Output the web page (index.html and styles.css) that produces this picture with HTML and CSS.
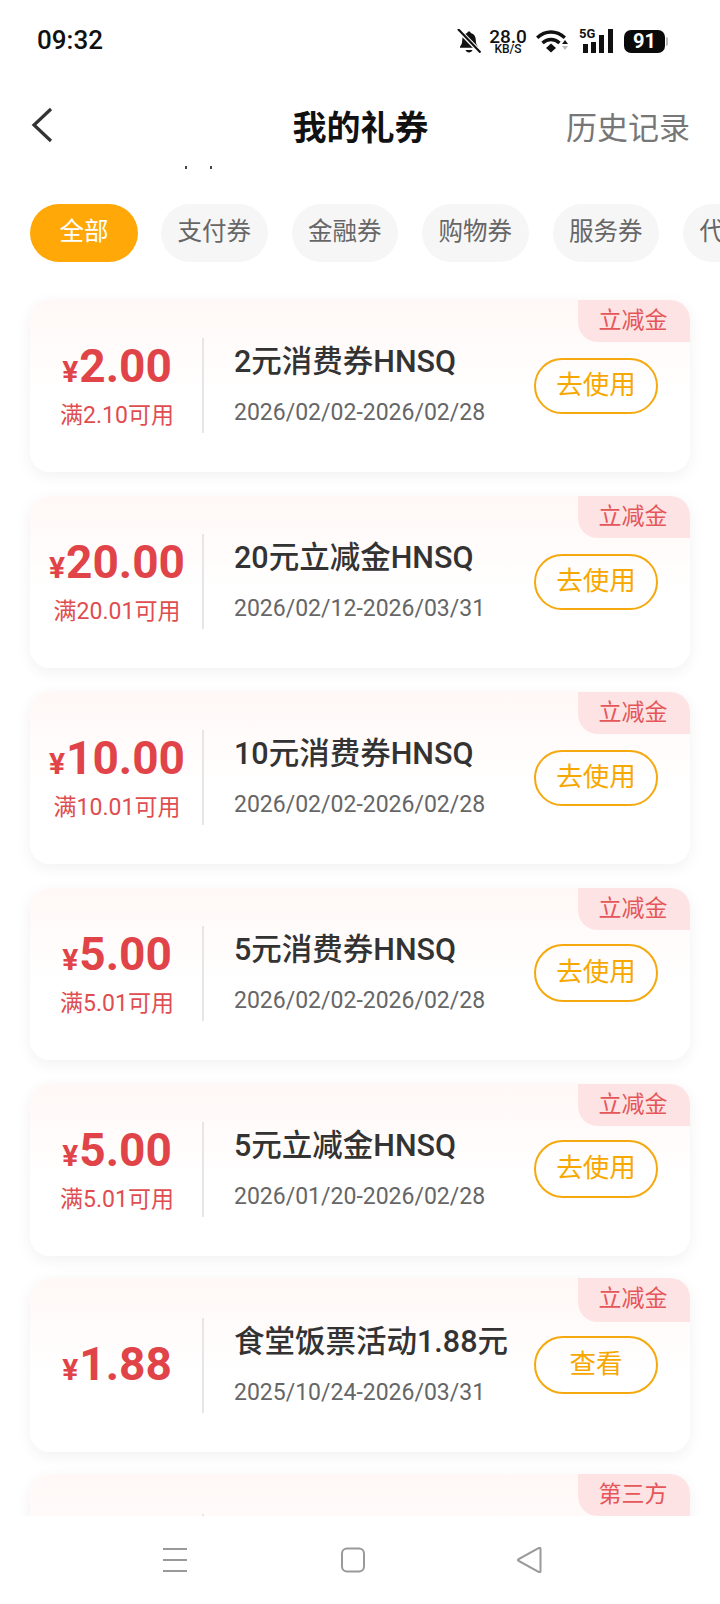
FILE: index.html
```html
<!DOCTYPE html>
<html lang="zh-CN">
<head>
    <meta charset="UTF-8">
    <meta name="viewport" content="width=device-width, initial-scale=1.0">
    <title>我的礼券</title>
    <link rel="stylesheet" href="styles.css">
</head>
<body>
    <div class="phone">
        <div class="status-bar">
            <span class="time">09:32</span>
            <div class="status-icons">
                <svg class="icon-bell" width="24" height="24" viewBox="0 0 24 24">
                    <path d="M12 2.5c1 0 1.7.7 1.8 1.6 3.4.9 5 3.6 5 7.1 0 2.6.6 4.600 2.200 6.300v1.300H3v-1.300c1.600-1.700 2.200-3.700 2.200-6.300 0-3.500 1.600-6.200 5-7.100.1-.9.8-1.600 1.800-1.600z" fill="#111"/>
                    <path d="M8.500 21h7c-.5 1.500-1.900 2.500-3.500 2.500s-3-1-3.500-2.500z" fill="#111"/>
                    <path d="M1.500 1 23 23" stroke="#fff" stroke-width="4.500"/>
                    <path d="M1 0 23.500 23.500" stroke="#111" stroke-width="2.200"/>
                </svg>
                <div class="net-speed">
                    <span class="speed-value">28.0</span>
                    <span class="speed-unit">KB/S</span>
                </div>
                <svg class="icon-wifi" width="32" height="24" viewBox="0 0 32 24">
                    <path d="M1.200 8.800C9.500 1 20.500 1 28.800 8.800" fill="none" stroke="#111" stroke-width="3.400"/>
                    <path d="M6.500 14c5-4.700 12-4.700 17 0" fill="none" stroke="#111" stroke-width="3.400"/>
                    <path d="M15 14.500l5 4.500-5 4.500-5-4.500z" fill="#111"/>
                    <path d="M29 11l3 4h-6z" fill="#111"/>
                    <path d="M29 21l3-4h-6z" fill="#bbb"/>
                </svg>
                <div class="signal">
                    <span class="signal-label">5G</span>
                    <svg width="31" height="25" viewBox="0 0 31 25">
                        <rect x="0" y="15" width="5" height="9" fill="#111"/>
                        <rect x="8" y="13" width="5" height="11" fill="#111"/>
                        <rect x="16" y="6" width="5" height="18" fill="#111"/>
                        <rect x="25" y="0" width="5" height="24" fill="#111"/>
                    </svg>
                </div>
                <div class="battery">91</div>
            </div>
        </div>

        <header class="top-bar">
            <svg class="back" width="24" height="36" viewBox="0 0 24 36">
                <path d="M21 2 4 18l17 16" fill="none" stroke="#333" stroke-width="3.200"/>
            </svg>
            <h1 class="page-title">我的礼券</h1>
            <a class="history">历史记录</a>
        </header>

        <main class="content">
            <i class="scroll-mark scroll-mark-a"></i>
            <i class="scroll-mark scroll-mark-b"></i>

            <div class="chips">
                <span class="chip active">全部</span>
                <span class="chip">支付券</span>
                <span class="chip">金融券</span>
                <span class="chip">购物券</span>
                <span class="chip">服务券</span>
                <span class="chip">代金券</span>
            </div>

            <div class="coupons">
                <div class="coupon">
                    <span class="tag">立减金</span>
                    <div class="price">
                        <div class="amount"><small>¥</small>2.00</div>
                        <div class="limit">满2.10可用</div>
                    </div>
                    <div class="info">
                        <div class="name">2元消费券HNSQ</div>
                        <div class="dates">2026/02/02-2026/02/28</div>
                    </div>
                    <button class="use-btn">去使用</button>
                </div>

                <div class="coupon">
                    <span class="tag">立减金</span>
                    <div class="price">
                        <div class="amount"><small>¥</small>20.00</div>
                        <div class="limit">满20.01可用</div>
                    </div>
                    <div class="info">
                        <div class="name">20元立减金HNSQ</div>
                        <div class="dates">2026/02/12-2026/03/31</div>
                    </div>
                    <button class="use-btn">去使用</button>
                </div>

                <div class="coupon">
                    <span class="tag">立减金</span>
                    <div class="price">
                        <div class="amount"><small>¥</small>10.00</div>
                        <div class="limit">满10.01可用</div>
                    </div>
                    <div class="info">
                        <div class="name">10元消费券HNSQ</div>
                        <div class="dates">2026/02/02-2026/02/28</div>
                    </div>
                    <button class="use-btn">去使用</button>
                </div>

                <div class="coupon">
                    <span class="tag">立减金</span>
                    <div class="price">
                        <div class="amount"><small>¥</small>5.00</div>
                        <div class="limit">满5.01可用</div>
                    </div>
                    <div class="info">
                        <div class="name">5元消费券HNSQ</div>
                        <div class="dates">2026/02/02-2026/02/28</div>
                    </div>
                    <button class="use-btn use-btn-tall">去使用</button>
                </div>

                <div class="coupon">
                    <span class="tag">立减金</span>
                    <div class="price">
                        <div class="amount"><small>¥</small>5.00</div>
                        <div class="limit">满5.01可用</div>
                    </div>
                    <div class="info">
                        <div class="name">5元立减金HNSQ</div>
                        <div class="dates">2026/01/20-2026/02/28</div>
                    </div>
                    <button class="use-btn use-btn-tall">去使用</button>
                </div>

                <div class="coupon coupon-tall">
                    <span class="tag tag-tall">立减金</span>
                    <div class="price">
                        <div class="amount"><small>¥</small>1.88</div>
                    </div>
                    <div class="info">
                        <div class="name">食堂饭票活动1.88元</div>
                        <div class="dates">2025/10/24-2026/03/31</div>
                    </div>
                    <button class="use-btn use-btn-tall">查看</button>
                </div>

                <div class="coupon coupon-tall">
                    <span class="tag">第三方</span>
                    <div class="price"></div>
                </div>
            </div>
        </main>

        <nav class="nav-bar">
            <svg width="26" height="26" viewBox="0 0 26 26">
                <path d="M1 2h24M1 13h24M1 24h24" stroke="#999" stroke-width="2"/>
            </svg>
            <svg width="26" height="26" viewBox="0 0 26 26">
                <rect x="2" y="1.500" width="22" height="23" rx="5" fill="none" stroke="#999" stroke-width="2"/>
            </svg>
            <svg width="26" height="26" viewBox="0 0 26 26">
                <path d="M23.500 1.500v23a1 1 0 0 1-1.500.500L2 14a1 1 0 0 1 0-2L22 1a1 1 0 0 1 1.500.500z" fill="none" stroke="#999" stroke-width="2"/>
            </svg>
        </nav>
    </div>
</body>
</html>
```

FILE: styles.css
```css
* {
    box-sizing: border-box;
}

body {
    margin: 0;
    background: #fff;
    font-family: Roboto, "Noto Sans CJK SC", sans-serif;
}

.phone {
    display: flex;
    flex-direction: column;
    width: 720px;
    height: 1604px;
    overflow: hidden;
    background: #fff;
}

/* status bar */
.status-bar {
    display: flex;
    justify-content: space-between;
    align-items: center;
    flex: none;
    height: 80px;
    padding: 0 55px 0 37px;
}

.time {
    font-size: 26px;
    font-weight: 500;
    color: #111;
}

.status-icons {
    display: flex;
    align-items: center;
    margin-top: 2px;
}

.net-speed {
    display: flex;
    flex-direction: column;
    align-items: center;
    width: 38px;
    margin-left: 8px;
    color: #111;
    font-weight: 500;
}

.speed-value {
    font-size: 19px;
    line-height: 15px;
}

.speed-unit {
    font-size: 12px;
    line-height: 10px;
}

.icon-wifi {
    margin-left: 9px;
}

.signal {
    position: relative;
    width: 31px;
    height: 25px;
    margin-left: 15px;
}

.signal-label {
    position: absolute;
    top: -2px;
    left: -4px;
    font-size: 13px;
    line-height: 13px;
    font-weight: 700;
    color: #111;
}

.battery {
    position: relative;
    width: 41px;
    height: 23px;
    margin-left: 10px;
    border-radius: 7px;
    background: #0a0a0a;
    color: #fff;
    font-size: 20px;
    font-weight: 700;
    line-height: 23px;
    text-align: center;
}

.battery::after {
    content: '';
    position: absolute;
    top: 7px;
    right: -3px;
    width: 2px;
    height: 9px;
    border-radius: 0 2px 2px 0;
    background: #bbb;
}

/* top bar */
.top-bar {
    display: grid;
    grid-template-columns: 1fr auto 1fr;
    align-items: center;
    flex: none;
    height: 86px;
    padding: 4px 30px 0 31px;
}

.back {
    display: block;
    margin-left: -1px;
}

.page-title {
    margin: 0;
    font-size: 34px;
    font-weight: 700;
    color: #111;
}

.history {
    justify-self: end;
    font-size: 31px;
    color: #777;
}

/* scrolling part */
.content {
    position: relative;
    flex: 1;
    min-height: 0;
    overflow: hidden;
}

.scroll-mark {
    position: absolute;
    top: 0;
    width: 2px;
    height: 3px;
    background: #444;
}

.scroll-mark-a {
    left: 185px;
}

.scroll-mark-b {
    left: 210px;
}

.chips {
    display: flex;
    gap: 24px;
    margin-top: 38px;
    padding-left: 30px;
    white-space: nowrap;
}

.chip {
    flex: none;
    height: 58px;
    padding: 0 16.500px;
    border-radius: 29px;
    background: #f6f6f6;
    color: #666;
    font-size: 24.500px;
    line-height: 56px;
}

.chip.active {
    width: 108px;
    margin-right: -1px;
    padding: 0;
    background: #ffa808;
    color: #fff;
    text-align: center;
}

.coupons {
    display: flex;
    flex-direction: column;
    gap: 24px;
    margin-top: 38px;
    padding: 0 30px;
}

.coupon {
    position: relative;
    display: flex;
    align-items: center;
    height: 172px;
    padding: 38px 0 39px;
    border-radius: 20px;
    background: linear-gradient(180deg, #fff8f6 0%, #fffcfb 32%, #fff 55%);
    box-shadow: 0 4px 16px rgba(0, 0, 0, 0.06);
}

.coupon-tall {
    height: 174px;
    margin-top: -2px;
    padding: 40px 0 39px;
}

.tag {
    position: absolute;
    top: 0;
    right: 0;
    width: 112px;
    height: 42px;
    padding-right: 2px;
    border-radius: 0 20px 0 20px;
    background: #fde3e3;
    color: #e5565a;
    font-size: 23px;
    line-height: 42px;
    text-align: center;
}

.tag-tall {
    height: 44px;
}

.price {
    display: flex;
    flex-direction: column;
    justify-content: center;
    align-items: center;
    flex: none;
    align-self: stretch;
    width: 174px;
    padding-top: 3px;
    padding-left: 2px;
    border-right: 2px solid #e6e6e6;
}

.amount {
    color: #e04448;
    font-size: 46px;
    font-weight: 700;
    line-height: 56px;
}

.amount small {
    margin-right: 1px;
    font-size: 30px;
}

.limit {
    margin: 0 0 4px;
    color: #e04d50;
    font-size: 23px;
    line-height: 32px;
}

.info {
    flex: 1;
    align-self: flex-start;
    min-width: 0;
    padding-left: 30px;
    white-space: nowrap;
}

.name {
    padding-top: 1px;
    color: #333;
    font-size: 30.500px;
    font-weight: 500;
    line-height: 46px;
}

.dates {
    margin-top: 12px;
    color: #666;
    font-size: 23px;
    line-height: 32px;
}

.use-btn {
    flex: none;
    width: 124px;
    height: 56px;
    margin-right: 32px;
    padding: 0 0 6px;
    border: 2px solid #f5a90f;
    border-radius: 28px;
    background: transparent;
    color: #f7a800;
    font-family: inherit;
    font-size: 26.500px;
}

.use-btn-tall {
    height: 58px;
    margin-bottom: 2px;
    border-radius: 29px;
}

/* system nav */
.nav-bar {
    display: flex;
    flex: none;
    height: 88px;
    padding: 31px 0 0 162px;
    gap: 151.500px;
    background: #fff;
}
```
